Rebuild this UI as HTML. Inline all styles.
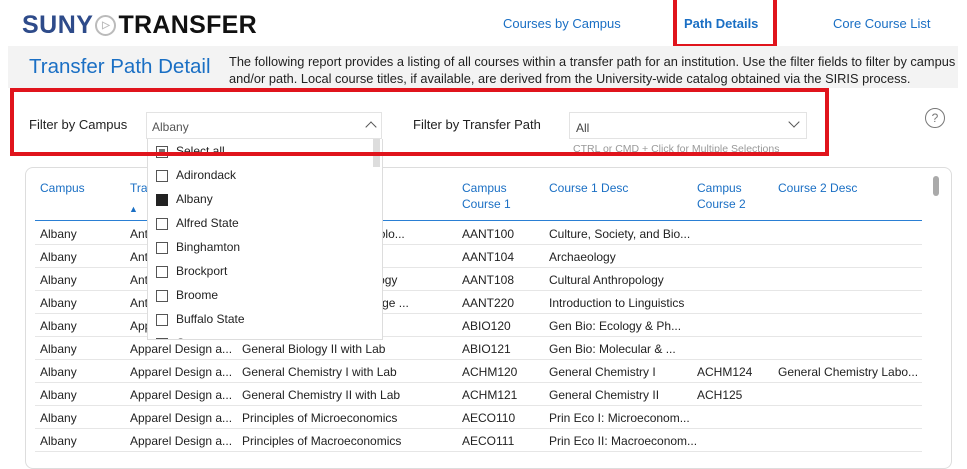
<!DOCTYPE html>
<html><head><meta charset="utf-8"><style>
body{margin:0;width:967px;height:446px;overflow:hidden;background:#fff;font-family:"Liberation Sans",sans-serif;position:relative}
.a{position:absolute;white-space:nowrap}
.nav{color:#1a6fc4;font-size:13px}
.hd{color:#1a6fc4;font-size:12px;line-height:16px}
.row{position:absolute;left:35px;width:887px;height:23px;border-bottom:1px solid #e6e6e6;font-size:12px;color:#222}
.row span{position:absolute;top:6px;white-space:nowrap}
.dd div{height:24px;font-size:12px;color:#222;position:relative}
.cb{position:absolute;left:8px;top:7px;width:10px;height:10px;border:1px solid #555;background:#fff}
.dd span{position:absolute;left:28px;top:5px}
</style></head><body>
<div class="a" style="left:22px;top:10px;height:30px;display:flex;align-items:center;font-size:25px;font-weight:bold"><span style="color:#2e4b8a;letter-spacing:0.5px">SUNY</span><span style="display:inline-block;width:21px;height:21px;border:2px solid #bbb;border-radius:50%;margin:0 2px;box-sizing:border-box;color:#bbb;font-size:10px;text-align:center;line-height:17px">&#9655;</span><span style="color:#111;letter-spacing:0.3px">TRANSFER</span></div>
<div class="a nav" style="left:503px;top:16px">Courses by Campus</div>
<div class="a nav" style="left:684px;top:16px;font-weight:bold">Path Details</div>
<div class="a" style="left:673px;top:-4px;width:96px;height:44px;border:4px solid #e0141c"></div>
<div class="a nav" style="left:833px;top:16px">Core Course List</div>
<div class="a" style="left:8px;top:46px;width:950px;height:42px;background:#f3f3f3"></div>
<div class="a" style="left:29px;top:55px;font-size:20.5px;color:#1a6fc4">Transfer Path Detail</div>
<div class="a" style="left:229px;top:53px;font-size:12.8px;line-height:17px;color:#222">The following report provides a listing of all courses within a transfer path for an institution. Use the filter fields to filter by campus<br>and/or path. Local course titles, if available, are derived from the University-wide catalog obtained via the SIRIS process.</div>
<div class="a" style="left:29px;top:117px;font-size:13px;color:#222">Filter by Campus</div>
<div class="a" style="left:146px;top:112px;width:234px;height:25px;border:1px solid #e3e3e3;background:#fff"><span class="a" style="left:5px;top:7px;font-size:12px;color:#555">Albany</span><span class="a" style="right:6px;top:10px;width:7px;height:7px;border-left:1px solid #555;border-top:1px solid #555;transform:rotate(45deg)"></span></div>
<div class="a" style="left:413px;top:117px;font-size:13px;color:#222">Filter by Transfer Path</div>
<div class="a" style="left:569px;top:112px;width:236px;height:25px;border:1px solid #e3e3e3"><span class="a" style="left:6px;top:8px;font-size:12px;color:#444">All</span><span class="a" style="right:8px;top:5px;width:7px;height:7px;border-right:1px solid #555;border-bottom:1px solid #555;transform:rotate(45deg)"></span></div>
<div class="a" style="left:573px;top:143px;font-size:10.5px;color:#999">CTRL or CMD + Click for Multiple Selections</div>
<div class="a" style="left:925px;top:108px;width:18px;height:18px;border:1px solid #777;border-radius:50%;font-size:12px;color:#777;text-align:center;line-height:18px">?</div>
<div class="a" style="left:25px;top:167px;width:925px;height:300px;border:1px solid #ddd;border-radius:8px"></div>
<div class="a" style="left:933px;top:176px;width:6px;height:20px;background:#aaa;border-radius:3px"></div>
<div class="a hd" style="left:40px;top:180px">Campus</div>
<div class="a hd" style="left:130px;top:180px">Transfer Path</div>
<div class="a" style="left:129px;top:204px;color:#1a6fc4;font-size:9px">&#9650;</div>
<div class="a hd" style="left:462px;top:180px">Campus<br>Course 1</div>
<div class="a hd" style="left:549px;top:180px">Course 1 Desc</div>
<div class="a hd" style="left:697px;top:180px">Campus<br>Course 2</div>
<div class="a hd" style="left:778px;top:180px">Course 2 Desc</div>
<div class="a" style="left:35px;top:220px;width:887px;height:1px;background:#2a7fd4"></div>
<div class="row" style="top:221px"><span style="left:5px">Albany</span><span style="left:95px">Anthropology</span><span style="left:207px">Intro to Biological Anthropolo...</span><span style="left:427px">AANT100</span><span style="left:514px">Culture, Society, and Bio...</span></div>
<div class="row" style="top:244px"><span style="left:5px">Albany</span><span style="left:95px">Anthropology</span><span style="left:207px">Intro to Archaeology</span><span style="left:427px">AANT104</span><span style="left:514px">Archaeology</span></div>
<div class="row" style="top:267px"><span style="left:5px">Albany</span><span style="left:95px">Anthropology</span><span style="left:207px">Intro to Cultural Anthropology</span><span style="left:427px">AANT108</span><span style="left:514px">Cultural Anthropology</span></div>
<div class="row" style="top:290px"><span style="left:5px">Albany</span><span style="left:95px">Anthropology</span><span style="left:207px">Intro to Linguistics/Language ...</span><span style="left:427px">AANT220</span><span style="left:514px">Introduction to Linguistics</span></div>
<div class="row" style="top:313px"><span style="left:5px">Albany</span><span style="left:95px">Apparel Design a...</span><span style="left:207px">General Biology I with Lab</span><span style="left:427px">ABIO120</span><span style="left:514px">Gen Bio: Ecology &amp; Ph...</span></div>
<div class="row" style="top:336px"><span style="left:5px">Albany</span><span style="left:95px">Apparel Design a...</span><span style="left:207px">General Biology II with Lab</span><span style="left:427px">ABIO121</span><span style="left:514px">Gen Bio: Molecular &amp; ...</span></div>
<div class="row" style="top:359px"><span style="left:5px">Albany</span><span style="left:95px">Apparel Design a...</span><span style="left:207px">General Chemistry I with Lab</span><span style="left:427px">ACHM120</span><span style="left:514px">General Chemistry I</span><span style="left:662px">ACHM124</span><span style="left:743px">General Chemistry Labo...</span></div>
<div class="row" style="top:382px"><span style="left:5px">Albany</span><span style="left:95px">Apparel Design a...</span><span style="left:207px">General Chemistry II with Lab</span><span style="left:427px">ACHM121</span><span style="left:514px">General Chemistry II</span><span style="left:662px">ACH125</span></div>
<div class="row" style="top:405px"><span style="left:5px">Albany</span><span style="left:95px">Apparel Design a...</span><span style="left:207px">Principles of Microeconomics</span><span style="left:427px">AECO110</span><span style="left:514px">Prin Eco I: Microeconom...</span></div>
<div class="row" style="top:428px"><span style="left:5px">Albany</span><span style="left:95px">Apparel Design a...</span><span style="left:207px">Principles of Macroeconomics</span><span style="left:427px">AECO111</span><span style="left:514px">Prin Eco II: Macroeconom...</span></div>
<div class="a dd" style="left:147px;top:139px;width:234px;height:200px;background:#fff;border:1px solid #ddd;border-top:none;overflow:hidden">
<div style="height:24px"><i class="cb" style="background:#777;box-shadow:inset 0 0 0 2px #fff"></i><span>Select all</span></div>
<div><i class="cb"></i><span>Adirondack</span></div>
<div><i class="cb" style="background:#222;border-color:#222"></i><span>Albany</span></div>
<div><i class="cb"></i><span>Alfred State</span></div>
<div><i class="cb"></i><span>Binghamton</span></div>
<div><i class="cb"></i><span>Brockport</span></div>
<div><i class="cb"></i><span>Broome</span></div>
<div><i class="cb"></i><span>Buffalo State</span></div>
<div><i class="cb"></i><span>Canton</span></div>
</div>
<div class="a" style="left:373px;top:139px;width:7px;height:28px;background:#ddd"></div>
<div class="a" style="left:10px;top:88px;width:811px;height:60px;border:4px solid #e0141c"></div>
</body></html>
